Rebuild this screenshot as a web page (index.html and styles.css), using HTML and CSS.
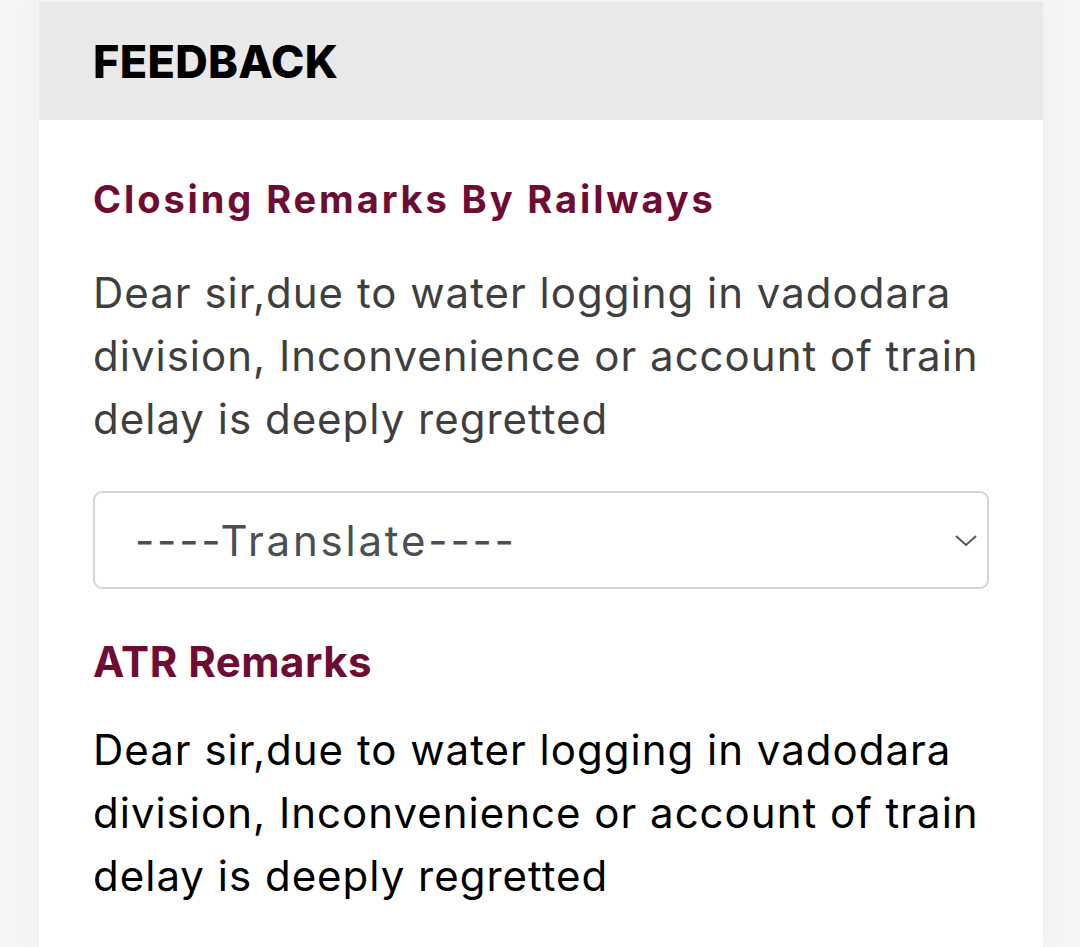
FILE: index.html
```html
<!DOCTYPE html>
<html lang="en">
<head>
    <meta charset="UTF-8">
    <meta name="viewport" content="width=device-width, initial-scale=1.0">
    <title>Feedback</title>
    <link rel="stylesheet" href="styles.css">
</head>
<body>
    <div class="card">
        <div class="card-header">
            <h1>FEEDBACK</h1>
        </div>

        <div class="card-body">
            <h2 class="remark-title">Closing Remarks By Railways</h2>
            <p class="remark-text muted">Dear sir,due to water logging in vadodara division, Inconvenience or account of train delay is deeply regretted</p>

            <div class="select-wrap">
                <select class="translate">
                    <option>----Translate----</option>
                    <option>Hindi</option>
                    <option>Gujarati</option>
                </select>
                <svg class="chevron" width="22" height="12" viewBox="0 0 22 12">
                    <path d="M1 1 L11 10 L21 1" fill="none" stroke="#555" stroke-width="2"/>
                </svg>
            </div>

            <h2 class="remark-title atr">ATR Remarks</h2>
            <p class="remark-text atr-text">Dear sir,due to water logging in vadodara division, Inconvenience or account of train delay is deeply regretted</p>
        </div>
    </div>
</body>
</html>
```

FILE: styles.css
```css
body {
    margin: 0;
    background: #f5f5f5;
    font-family: 'Inter', 'Open Sans', sans-serif;
    min-height: 100vh;
}

.card {
    width: 1004px;
    margin: 2px 0 0 39px;
    background: #fff;
    min-height: 945px;
    box-shadow: 0 0 30px rgba(0, 0, 0, 0.03);
}

.card-header {
    background: #e9e9e9;
    height: 118px;
    padding: 0 54px;
    display: flex;
    align-items: center;
}

.card-header h1 {
    margin: 0;
    font-size: 45px;
    font-weight: 800;
    color: #000;
    letter-spacing: 0.3px;
}

.card-body {
    padding: 54px 54px 0;
}

.remark-title {
    margin: 0;
    font-size: 38px;
    font-weight: 700;
    color: #6e0c33;
    line-height: 50px;
    letter-spacing: 2.9px;
}

.remark-title.atr {
    font-size: 42px;
    letter-spacing: 0.5px;
}

.remark-text {
    margin: 37px 0 0;
    font-size: 42px;
    line-height: 63px;
    letter-spacing: 1px;
    color: #000;
}

.remark-text.muted {
    color: #3f3f3f;
}

.remark-text.atr-text {
    margin-top: 31px;
}

.select-wrap {
    position: relative;
    margin: 41px 0 48px;
}

.translate {
    display: block;
    width: 100%;
    height: 98px;
    appearance: none;
    -webkit-appearance: none;
    background: #fff;
    border: 2px solid #d6d6d6;
    border-radius: 9px;
    padding: 0 40px;
    font-family: inherit;
    font-size: 42px;
    letter-spacing: 2.8px;
    color: #4a4f55;
}

.chevron {
    position: absolute;
    right: 12px;
    top: 44px;
    pointer-events: none;
}
```
